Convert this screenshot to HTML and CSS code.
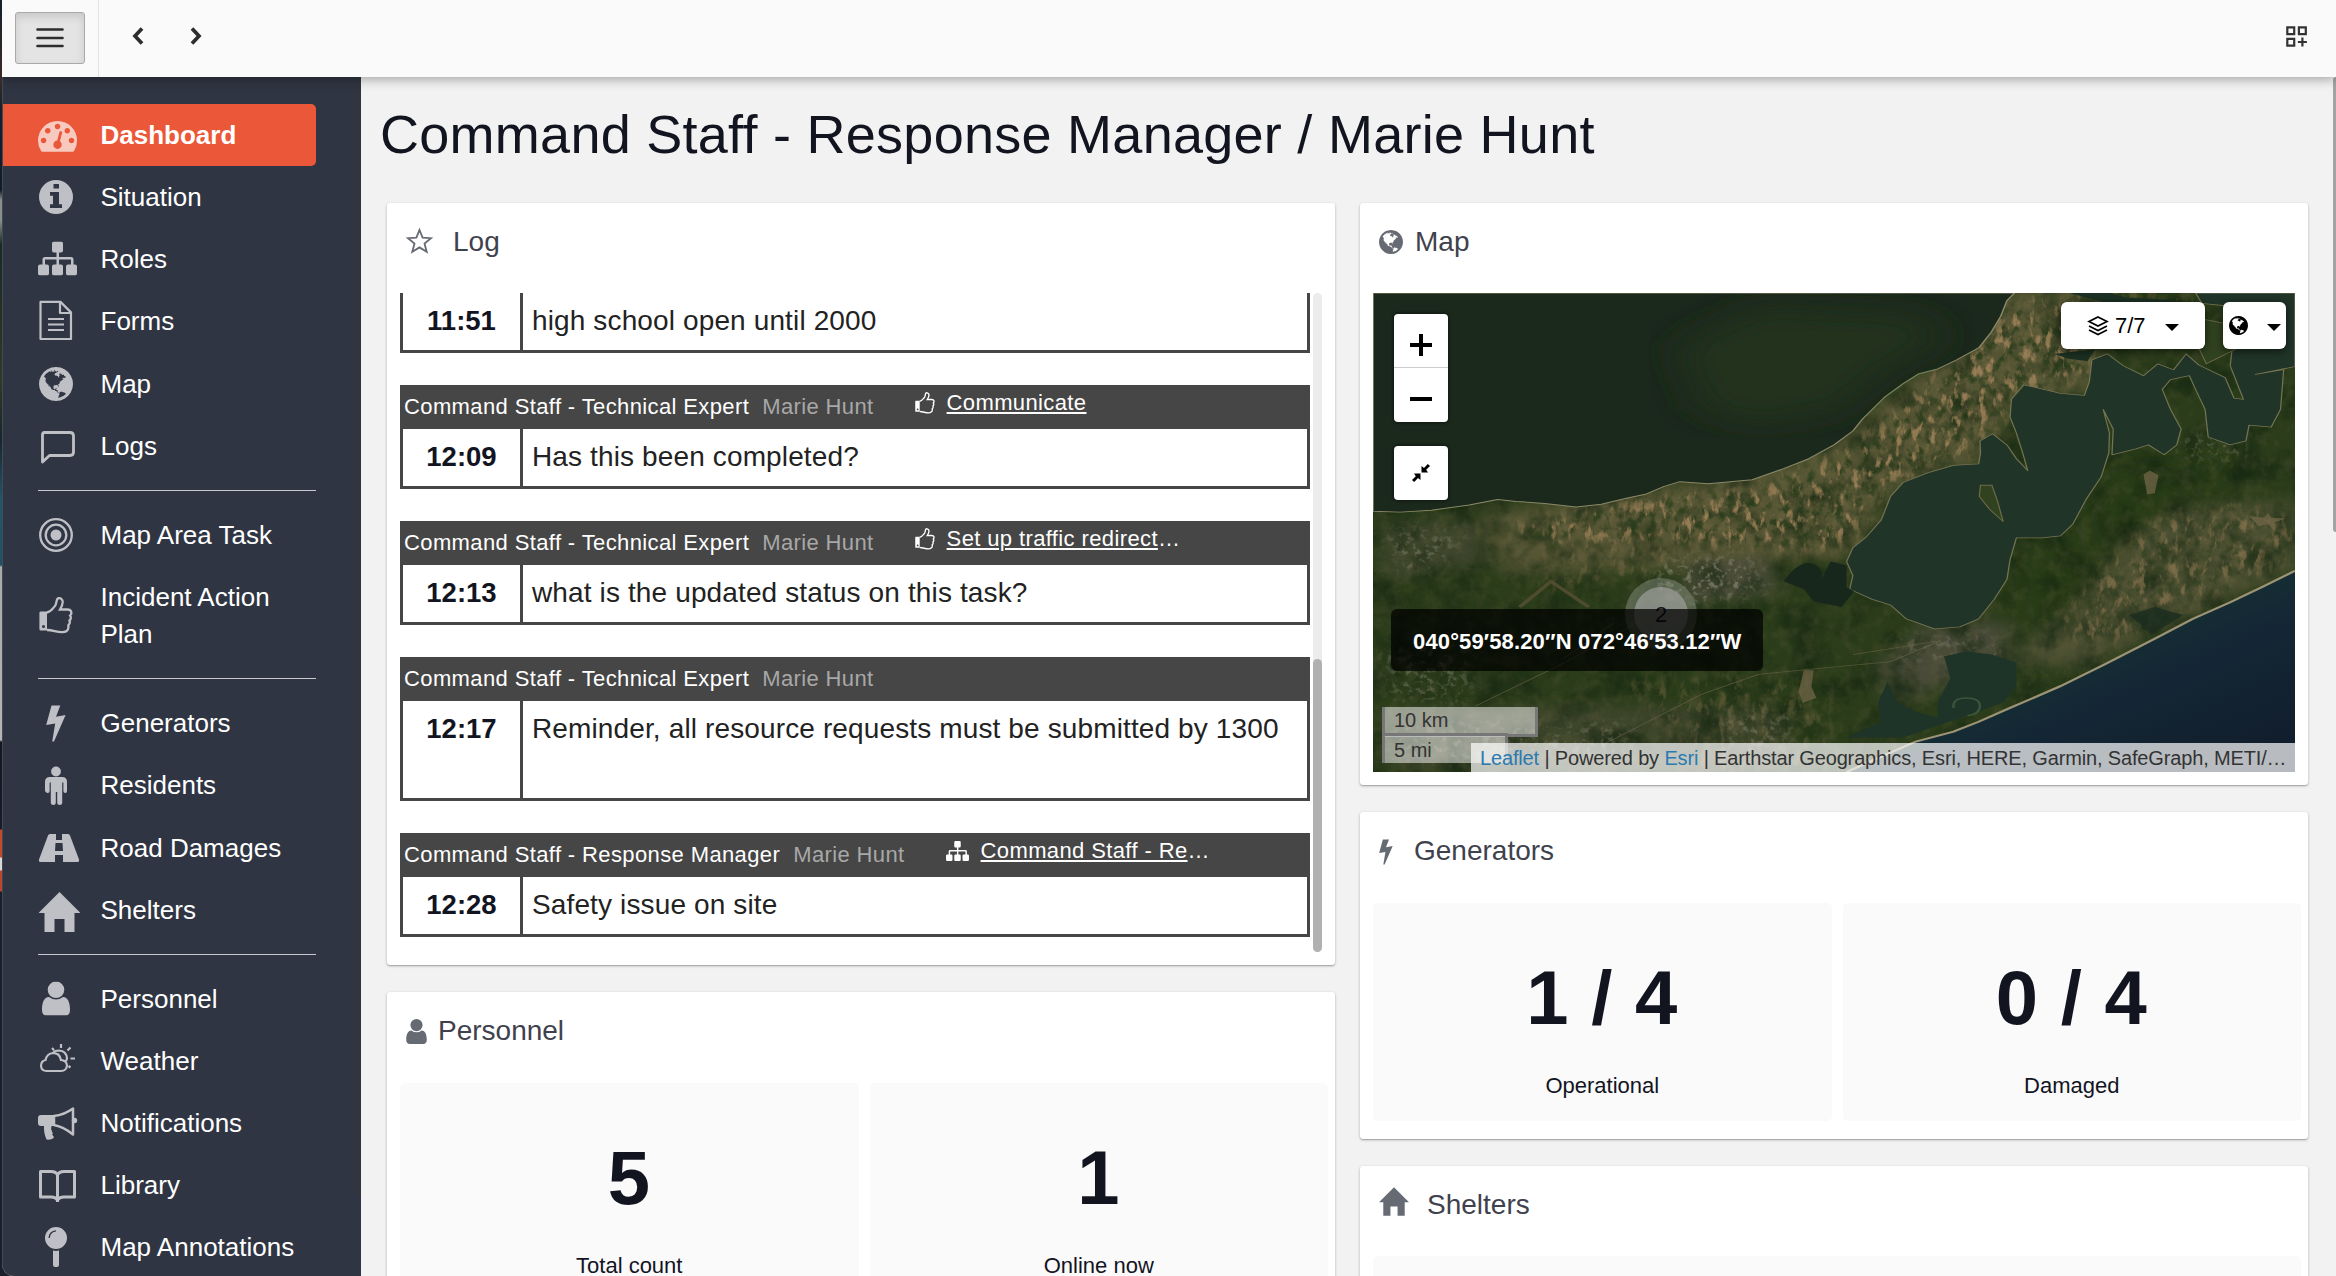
FILE: index.html
```html
<!DOCTYPE html>
<html lang="en">
<head>
<meta charset="utf-8">
<title>Command Staff Dashboard</title>
<link rel="stylesheet" href="styles.css">
</head>
<body>
<svg class="defs" aria-hidden="true">
  <symbol id="globe" viewBox="128 128 1536 1536"><path d="M896 128q209 0 385.500 103t279.500 279.500 103 385.500-103 385.500-279.500 279.500-385.500 103-385.500-103-279.500-279.500-103-385.500 103-385.500 279.500-279.500 385.500-103zm274 521q-2 1-9.500 9.500t-13.500 9.500q2 0 4.500-5t5-11 3.500-7q6-7 22-15 14-6 52-12 34-8 51 11-2-2 9.500-13t14.500-12q3-2 15-4.500t15-7.500l2-22q-12 1-17.500-7t-6.500-21q0 2-6 8 0-7-4.500-8t-11.500 1-9 1q-10-3-15-7.500t-8-16.500-4-15q-2-5-9.500-11t-9.500-10q-1-2-2.500-5.500t-3-6.500-4-5.500-5.500-2.500-7 5-7.500 10-4.500 5q-3-2-6-1.500t-4.500 1-4.500 3-5 3.500q-3 2-8.500 3t-8.500 2q15-5-1-11-10-4-16-3 9-4 7.500-12t-8.500-14h5q-1-4-8.500-8.500t-17.500-8.500-13-6q-8-5-34-9.500t-33-.5q-5 6-4.500 10.500t4 14 3.500 12.500q1 6-5.500 13t-6.500 12q0 7 14 15.500t10 21.500q-3 8-16 16t-16 12q-5 8-1.500 18.500t10.500 16.500q2 2 1.500 4t-3.500 4.500-5.500 4-6.500 3.500l-3 2q-11 5-20.500-6t-13.500-26q-7-25-16-30-23-8-29 1-5-13-41-26-25-9-58-4 6-1 0-15-7-15-19-12 3-6 4-17.500t1-13.500q3-13 12-23 1-1 7-8.500t9.500-13.500.5-6q35 4 50-11 5-5 11.500-17t10.500-17q9-6 14-5.500t14.500 5.500 14.500 5q14 1 15.500-11t-7.500-20q12 1 3-17-4-7-8-9-12-4-27 5-8 4 2 8-1-1-9.500 10.500t-16.500 17.500-16-5q-1-1-5.500-13.500t-9.500-13.500q-8 0-16 15 3-8-11-15t-24-8q19-12-8-27-7-4-20.500-5t-19.500 4q-5 7-5.500 11.500t5 8 10.500 5.500 11.500 4 8.500 3q14 10 8 14-2 1-8.500 3.500t-11.500 4.500-6 4q-3 4 0 14t-2 14q-5-5-9-17.500t-7-16.500q7 9-25 6l-10-1q-4 0-16 2t-20.500 1-13.500-8q-4-8 0-20 1-4 4-2-4-3-11-9.500t-10-8.500q-46 15-94 41 6 1 12-1 5-2 13-6.500t10-5.500q34-14 42-7l5-5q14 16 20 25-7-4-30-1-20 6-22 12 7 12 5 18-4-3-11.500-10t-14.500-11-15-5q-16 0-22 1-146 80-235 222 7 7 12 8 4 1 5 9t2.500 11 11.500-3q9 8 3 19 1-1 44 27 19 17 21 21 3 11-10 18-1-2-9-9t-9-4q-3 5 .5 18.500t10.500 12.500q-7 0-9.500 16t-2.500 35.500-1 23.500l2 1q-3 12 5.500 34.500t21.500 19.500q-13 3 20 43 6 8 8 9 3 2 12 7.500t15 10 10 10.500q4 5 10 22.500t14 23.500q-2 6 9.500 20t10.500 23q-1 0-2.500 1t-2.500 1q3 7 15.500 14t15.500 13q1 3 2 10t3 11 8 2q2-20-24-62-15-25-17-29-3-5-5.500-15.500t-4.500-14.500q2 0 6 1.500t8.500 3.500 7.500 4 2 3q-3 7 2 17.500t12 18.500 17 19 12 13q6 6 14 19.500t0 13.500q9 0 20 10.500t17 19.500q5 8 8 26t5 24q2 7 8.500 13.500t12.500 9.500l16 8 13 7q5 2 18.500 10.500t21.500 11.500q10 4 16 4t14.500-2.500 13.500-3.500q15-2 29 15t21 21q36 19 55 11-2 1 .5 7.500t8 15.500 9 14.500 5.500 8.500q5 6 18 15t18 15q6-4 7-9-3 8 7 20t18 10q14-3 14-32-31 15-49-18 0-1-2.500-5.500t-4-8.500-2.500-8.500 0-7.500 5-3q9 0 10-3.500t-2-12.500-4-13q-1-8-11-20t-12-15q-5 9-16 8t-16-9q0 1-1.500 5.500t-1.500 6.500q-13 0-15-1 1-3 2.500-17.500t3.500-22.500q1-4 5.500-12t7.500-14.500 4-12.500-4.500-9.500-17.500-2.500q-19 1-26 20-1 3-3 10.500t-5 11.500-9 7q-7 3-24 2t-24-5q-13-8-22.500-29t-9.500-37q0-10 2.500-26.500t3-25-5.500-24.500q3-2 9-9.500t10-10.500q2-1 4.500-1.500t4.500 0 4-1.500 3-6q-1-1-4-3-3-3-4-3 7 3 28.500-1.500t27.500 1.500q15 11 22-2 0-1-2.500-9.500t-.5-13.500q5 27 29 9 3 3 15.500 5t17.500 5q3 2 7 5.500t5.500 4.500 5-.5 8.500-6.500q10 14 12 24 11 40 19 44 7 3 11 2t4.500-9.500 0-14-1.500-12.500l-1-8v-18l-1-8q-15-3-18.500-12t1.500-18.500 15-18.500q1-1 8-3.500t15.500-6.500 12.500-8q21-19 15-35 7 0 11-9-1 0-5-3t-7.500-5-4.500-2q9-5 2-16 5-3 7.500-11t7.500-10q9 12 21 2 8-8 1-16 5-7 20.500-10.500t18.500-9.500q7 2 8-2t1-12 3-12q4-5 15-9t13-5l17-11q3-4 0-4 18 2 31-11 10-11-6-20 3-6-3-9.500t-15-5.500q3-1 11.500-.5t10.500-1.500q15-10-7-16-17-5-43 12zm-163 877q206-36 351-189-3-3-12.500-4.500t-12.500-3.500q-18-7-24-8 1-7-2.500-13t-8-9-12.500-8-11-7q-2-2-7-6t-7-5.500-7.500-4.500-8.500-2-10 1l-3 1q-3 1-5.500 2.500t-5.500 3-4 3 0 2.500q-21-17-36-22-5-1-11-5.500t-10.500-7-10-1.500-11.500 7q-5 5-6 15t-2 13q-7-5 0-17.500t2-18.500q-3-6-10.500-4.500t-12 4.500-11.500 8.500-9 6.500-8.500 5.500-8.500 7.500q-3 4-6 12t-5 11q-2-4-11.500-6.500t-9.500-5.500q2 10 4 35t5 38q7 31-12 48-27 25-29 40-4 22 12 26 0 7-8 20.500t-7 21.500q0 6 2 16z"/></symbol>
  <symbol id="sitemap" viewBox="0 0 39 34"><path d="M16 0h7a2 2 0 0 1 2 2v7a2 2 0 0 1-2 2h-2v4.500h12a2.500 2.500 0 0 1 2.500 2.500v5H37a2 2 0 0 1 2 2v7a2 2 0 0 1-2 2h-7a2 2 0 0 1-2-2v-7a2 2 0 0 1 2-2h3v-5H21v5h2a2 2 0 0 1 2 2v7a2 2 0 0 1-2 2h-7a2 2 0 0 1-2-2v-7a2 2 0 0 1 2-2h2.500v-5H7v5h2a2 2 0 0 1 2 2v7a2 2 0 0 1-2 2H2a2 2 0 0 1-2-2v-7a2 2 0 0 1 2-2h2.500v-5A2.500 2.500 0 0 1 7 15.500h11.500V11H16a2 2 0 0 1-2-2V2a2 2 0 0 1 2-2z"/></symbol>
  <symbol id="thumb" viewBox="0 0 34 37"><path fill-rule="evenodd" d="M1.500 14.500H8v19H2a1.600 1.600 0 0 1-1.600-1.600V16a1.500 1.500 0 0 1 1.100-1.500zM4.500 28a1.500 1.500 0 1 0 0 3 1.500 1.500 0 0 0 0-3z"/><path class="line" d="M8 15.500c4-.6 5.500-4 8-6.500 1.300-1.300 1.200-5 2.300-7 1-1.500 3.700-1 4.900 1 1.500 2.700-.4 6.500-2.200 9.500h7.500c4.200 0 4.800 4 2.600 6 1.200 1.600.8 4-.6 5 .7 2 .2 3.600-1.200 4.800.7 4.300-1.200 6.700-5.500 6.900-6.400.3-9-2-15.800-2.200" fill="none" stroke-width="2.300"/></symbol>
  <symbol id="bolt" viewBox="0 0 20 37"><path d="M5.500.5h8.800L10 11.800l9.600-1.700L8 36.500H6.200l3-18L.2 20z"/></symbol>
  <symbol id="home" viewBox="0 0 42 40"><path d="M21 0 42 21h-6v19H26V27H16v13H6V21H0z"/></symbol>
  <symbol id="person" viewBox="0 0 28 34"><path d="M14 0a8.300 8.300 0 1 1 0 16.600A8.300 8.300 0 0 1 14 0zM7 15.500q7 5 14 0c5 0 7 6 7 12.500 0 4-1.500 6-5 6H5c-3.500 0-5-2-5-6 0-6.500 2-12.500 7-12.500z"/></symbol>
</svg>

<div class="window">
  <header class="topbar">
    <button class="menu-button" aria-label="Menu">
      <svg width="28" height="20"><path d="M1.500 1.500h25M1.500 10h25M1.500 18h25" stroke="#2d2d2d" stroke-width="2.600" stroke-linecap="round"/></svg>
    </button>
    <div class="topbar-divider"></div>
    <svg class="back" width="12" height="18"><path d="M10 1.500 3 9l7 7.500" fill="none" stroke="#2d2d2d" stroke-width="3.700"/></svg>
    <svg class="forward" width="12" height="18"><path d="M2 1.500 9 9l-7 7.500" fill="none" stroke="#2d2d2d" stroke-width="3.700"/></svg>
    <svg class="add-widget" width="21" height="21"><path d="M1.300 1.300h6.900v6.900H1.300zM12.900 1.300h6.900v6.900h-6.900zM1.300 12.800h6.900v6.900H1.300zM16.400 11.500v9M11.900 16h9" fill="none" stroke="#333" stroke-width="2.200"/></svg>
  </header>

  <div class="workspace">
    <nav class="sidebar">
      <a class="nav-item active"><svg class="nav-icon"><path transform="translate(6 4.400) scale(.0218)" d="M384 1152q0-53-37.500-90.500t-90.500-37.500-90.500 37.500-37.500 90.500 37.500 90.500 90.500 37.500 90.500-37.500 37.500-90.500zm192-448q0-53-37.500-90.500t-90.500-37.500-90.500 37.500-37.500 90.500 37.500 90.500 90.500 37.500 90.500-37.500 37.500-90.500zm428 481l101-382q6-26-7.500-48.500t-38.500-29.500-48 6.500-30 39.500l-101 382q-60 5-107 43.500t-63 98.500q-20 77 20 146t117 89 146-20 89-117q16-60-6-117t-72-91zm660-33q0-53-37.500-90.500t-90.500-37.500-90.500 37.500-37.500 90.500 37.500 90.500 90.500 37.500 90.500-37.500 37.500-90.500zm-640-640q0-53-37.500-90.500t-90.500-37.500-90.500 37.500-37.500 90.500 37.500 90.500 90.500 37.500 90.500-37.500 37.500-90.500zm448 192q0-53-37.500-90.500t-90.500-37.500-90.500 37.500-37.500 90.500 37.500 90.500 90.500 37.500 90.500-37.500 37.500-90.500zm320 448q0 261-141 483-19 29-54 29h-1402q-35 0-54-29-141-221-141-483 0-182 71-348t191-286 286-191 348-71 348 71 286 191 191 286 71 348z"/></svg><span>Dashboard</span></a>
      <a class="nav-item"><svg class="nav-icon"><path fill-rule="evenodd" d="M24 7a17 17 0 1 1 0 34 17 17 0 0 1 0-34zm-2.500 4v4.500h5.500V11zm-3.500 8v3.700h3v8.600h-3V35h12v-3.700h-3V19z"/></svg><span>Situation</span></a>
      <a class="nav-item"><svg class="nav-icon"><use href="#sitemap" x="6" y="6.500" width="39" height="34"/></svg><span>Roles</span></a>
      <a class="nav-item"><svg class="nav-icon"><path d="M8.500 4.900h20l10.500 10.500V42h-30.500zM28 5v11h11M16 22h16M16 27.500h16M16 33h16" fill="none" class="line" stroke-width="2.200" stroke-linejoin="round"/></svg><span>Forms</span></a>
      <a class="nav-item"><svg class="nav-icon"><use href="#globe" x="7" y="7" width="34" height="34"/></svg><span>Map</span></a>
      <a class="nav-item"><svg class="nav-icon"><path d="M12.500 10.500h25.500q3.500 0 3.500 3.500v16q0 3.500-3.500 3.500H17.500L10.500 40V13q0-2.500 2-2.500z" fill="none" class="line" stroke-width="2.800" stroke-linejoin="round"/></svg><span>Logs</span></a>
      <hr>
      <a class="nav-item"><svg class="nav-icon"><circle cx="24" cy="24" r="5.500"/><circle cx="24" cy="24" r="10.300" fill="none" class="line" stroke-width="2.300"/><circle cx="24" cy="24" r="15.800" fill="none" class="line" stroke-width="2.300"/></svg><span>Map Area Task</span></a>
      <a class="nav-item"><svg class="nav-icon"><use href="#thumb" x="7" y="5" width="34" height="37"/></svg><span>Incident Action Plan</span></a>
      <hr>
      <a class="nav-item"><svg class="nav-icon"><use href="#bolt" x="14" y="6" width="20" height="37"/></svg><span>Generators</span></a>
      <a class="nav-item"><svg class="nav-icon"><circle cx="24" cy="10.500" r="4.900"/><path d="M18 16h12q5 0 5 5v9q0 2-1.800 2t-1.800-2v-8.500h-1.200V42q0 2-2.500 2t-2.500-2V31h-1.400v11q0 2-2.500 2t-2.500-2V21.500h-1.200V30q0 2-1.800 2T13 30v-9q0-5 5-5z"/></svg><span>Residents</span></a>
      <a class="nav-item"><svg class="nav-icon"><path fill-rule="evenodd" d="M18 10h6v6h6v-6h6q1.500 0 2 1.500l9 24q.6 2.500-1.500 2.500H31v-7h-8v7H8.500q-2.100 0-1.500-2.500l9-24q.5-1.500 2-1.500zm5.500 9-.5 8h8l-.5-8z"/></svg><span>Road Damages</span></a>
      <a class="nav-item"><svg class="nav-icon"><use href="#home" x="6.500" y="6" width="42" height="40"/></svg><span>Shelters</span></a>
      <hr>
      <a class="nav-item"><svg class="nav-icon"><use href="#person" x="10" y="6.500" width="28" height="34"/></svg><span>Personnel</span></a>
      <a class="nav-item"><svg class="nav-icon"><path d="M14.500 34H29q5.500 0 6-5.500-.5-5-6-5.500-1.500-7-8-7-6 .5-7.500 7Q9 24 9 29q.5 5 5.500 5zM21 16q1.500-2.500 6-2.500 7.500.5 8 8-.5 2-1.500 3M29 23q-1-4-3-6M29 7v4M20 11l2 2.200M38.500 10.500l-3 3M38.500 21.500H43M36.500 29l2 1.500" fill="none" class="line" stroke-width="2.200"/></svg><span>Weather</span></a>
      <a class="nav-item"><svg class="nav-icon"><path d="M9 16h13v11h-2.500q-1 3 .5 5.500t0 3l2 2.500-1 1.500q-2 1.500-6.500 1-3-7-2.500-13.500H9q-3 0-3-3v-5q0-3 3-3z"/><path d="M22 17q10-1 19-7.500v26Q32 28 22 26z" fill="none" class="line" stroke-width="2.500" stroke-linejoin="round"/><circle cx="42.500" cy="21.500" r="2.700"/></svg><span>Notifications</span></a>
      <a class="nav-item"><svg class="nav-icon"><path d="M8.500 10.500H19q5 0 6.500 3.500 1.500-3.500 6.500-3.500h10.500V36H32q-5 0-6.500 3.500Q24 36 19 36H8.500zM25.500 14v27" fill="none" class="line" stroke-width="3" stroke-linejoin="round"/></svg><span>Library</span></a>
      <a class="nav-item"><svg class="nav-icon"><path fill-rule="evenodd" d="M24 4a11 11 0 1 1 0 22 11 11 0 0 1 0-22zm0 3.200q-7 .5-7.500 7.800h1.300q.6-6 6.200-6.500zM21 27.500q3 .8 6 0V42q0 2-2 2h-2q-2 0-2-2z"/></svg><span>Map Annotations</span></a>
      <div class="sidebar-track"></div>
    </nav>

    <main class="content">
      <h1>Command Staff - Response Manager / Marie Hunt</h1>
      <div class="columns">
        <div class="column">
          <section class="card log-card">
            <h2><svg class="title-icon star" width="27" height="26"><path d="M13.500 2 16.600 9.600 25 10.200 18.500 15.600 20.700 23.800 13.500 19.400 6.300 23.800 8.500 15.600 2 10.200 10.400 9.600z" fill="none" stroke="#666a73" stroke-width="1.800"/></svg>Log</h2>
            <div class="log-view">
              <div class="log-list">
                <article class="entry"><div class="entry-body"><time>11:51</time><p>high school open until 2000</p></div></article>
                <article class="entry">
                  <div class="entry-head">Command Staff - Technical Expert<span class="author">Marie Hunt</span><svg class="ref-icon" width="20" height="22"><use href="#thumb"/></svg><a>Communicate</a></div>
                  <div class="entry-body"><time>12:09</time><p>Has this been completed?</p></div>
                </article>
                <article class="entry">
                  <div class="entry-head">Command Staff - Technical Expert<span class="author">Marie Hunt</span><svg class="ref-icon" width="20" height="22"><use href="#thumb"/></svg><a>Set up traffic redirect</a><span class="more">…</span></div>
                  <div class="entry-body"><time>12:13</time><p>what is the updated status on this task?</p></div>
                </article>
                <article class="entry">
                  <div class="entry-head">Command Staff - Technical Expert<span class="author">Marie Hunt</span></div>
                  <div class="entry-body tall"><time>12:17</time><p>Reminder, all resource requests must be submitted by 1300</p></div>
                </article>
                <article class="entry">
                  <div class="entry-head">Command Staff - Response Manager<span class="author">Marie Hunt</span><svg class="ref-icon wide" width="23" height="20"><use href="#sitemap"/></svg><a>Command Staff - Re</a><span class="more">…</span></div>
                  <div class="entry-body"><time>12:28</time><p>Safety issue on site</p></div>
                </article>
              </div>
              <div class="log-track"><div class="log-thumb"></div></div>
            </div>
          </section>
          <section class="card stats-card">
            <h2><svg class="title-icon person" width="21" height="25"><use href="#person"/></svg>Personnel</h2>
            <div class="stats">
              <div class="stat"><strong>5</strong><span>Total count</span></div>
              <div class="stat"><strong>1</strong><span>Online now</span></div>
            </div>
          </section>
        </div>

        <div class="column">
          <section class="card map-card">
            <h2><svg class="title-icon globe" width="24" height="24"><use href="#globe"/></svg>Map</h2>
            <div class="map">
              <svg class="imagery" viewBox="37 286 1466 1211" preserveAspectRatio="none">
                <defs>
                  <filter id="grain" x="0" y="0" width="100%" height="100%" color-interpolation-filters="sRGB"><feTurbulence type="fractalNoise" baseFrequency=".02 .013" numOctaves="5" seed="4"/><feColorMatrix values="0 0 0 0 .07  0 0 0 0 .14  0 0 0 0 .06  2.400 0 0 0 -1"/></filter>
                  <filter id="olive" x="0" y="0" width="100%" height="100%" color-interpolation-filters="sRGB"><feTurbulence type="fractalNoise" baseFrequency=".05 .03" numOctaves="5" seed="12"/><feColorMatrix values="0 0 0 0 .42  0 0 0 0 .39  0 0 0 0 .25  3 0 0 0 -1.300"/></filter>
                  <filter id="crops" x="0" y="0" width="100%" height="100%" color-interpolation-filters="sRGB"><feTurbulence type="fractalNoise" baseFrequency=".07 .035" numOctaves="4" seed="21"/><feColorMatrix values="0 0 0 0 .13  0 0 0 0 .22  0 0 0 0 .09  4 0 0 0 -1.900"/></filter>
                  <filter id="fields" x="0" y="0" width="100%" height="100%" color-interpolation-filters="sRGB"><feTurbulence type="fractalNoise" baseFrequency=".075 .026" numOctaves="4" seed="9"/><feColorMatrix values="0 0 0 0 .66  0 0 0 0 .53  0 0 0 0 .37  5.500 0 0 0 -3.050"/></filter>
                  <filter id="town" x="0" y="0" width="100%" height="100%" color-interpolation-filters="sRGB"><feTurbulence type="fractalNoise" baseFrequency=".09 .06" numOctaves="4" seed="31"/><feColorMatrix values="0 0 0 0 .56  0 0 0 0 .55  0 0 0 0 .48  5 0 0 0 -2.600"/></filter>
                  <filter id="soft"><feGaussianBlur stdDeviation="18"/></filter>
                  <filter id="shoal"><feGaussianBlur stdDeviation="35"/></filter>
                  <linearGradient id="ocean" x1="0" y1="0" x2="1" y2="1"><stop offset=".35" stop-color="#193633"/><stop offset=".6" stop-color="#142735"/><stop offset="1" stop-color="#101b2b"/></linearGradient>
                  <mask id="farm-area"><g filter="url(#soft)" fill="#fff"><path d="M250 880 500 800 650 780 800 680 920 520 1060 310 1170 300 1170 500 1060 540 1030 620 960 710 850 770 790 930 650 930 520 920 330 930z"/><path d="M1290 850 1400 820 1500 860 1503 950 1300 1100 1180 1190 1130 1120 1200 980zM1080 290h260v60h-260z" fill="#999"/><path d="M430 1260h330v237H560zM330 900 540 900 500 1000 300 1040z" fill="#555"/></g></mask>
                  <mask id="town-area"><g filter="url(#soft)" fill="#fff"><path d="M500 960 640 950 660 1040 540 1070 480 1020z"/><path d="M50 1180h140v140H70zM600 1350h120l-40 90h-80zM1310 650h110v60h-90zM60 880h130l-60 110H70z" fill="#aaa"/><path d="M70 1370h380v100H70zM870 1150h170v70H870z" fill="#888"/></g></mask>
                </defs>
                <rect x="37" y="286" width="1466" height="1211" fill="#2a3c1a"/>
                <g filter="url(#soft)">
                  <path d="M200 850 520 770 720 710 900 490 1060 270 1190 270 1190 530 1060 560 1000 720 860 790 800 950 550 980 250 1000z" fill="#575635"/>
                  <path d="M1270 830 1503 810V980L1170 1230 1040 1220 1150 1080z" fill="#4c4f30"/>
                  <path d="M540 970 660 950 680 1040 530 1070zM920 1120 1050 1120 1040 1220 860 1330 840 1230z" fill="#4a4c38"/>
                  <path d="M45 870 200 860 220 960 60 1020zM60 1340 460 1330 700 1340 680 1490 60 1490z" fill="#3d452a"/>
                  <path d="M1230 720 1400 700 1300 850 1180 960 1160 850zM1060 910 1200 980 1120 1130 1060 1110z" fill="#263a12"/>
                </g>
                <rect x="37" y="286" width="1466" height="1211" filter="url(#grain)" opacity=".7"/>
                <rect x="37" y="286" width="1466" height="1211" filter="url(#olive)" opacity=".2"/>
                <g mask="url(#farm-area)"><rect x="37" y="286" width="1466" height="1211" filter="url(#olive)" opacity=".6"/><rect x="37" y="286" width="1466" height="1211" filter="url(#crops)" opacity=".7"/><rect x="37" y="286" width="1466" height="1211" filter="url(#fields)" opacity=".8"/></g>
                <g mask="url(#town-area)"><rect x="37" y="286" width="1466" height="1211" filter="url(#town)" opacity=".65"/></g>
                <path d="M270 1080 320 1015 380 1080" fill="none" stroke="#5e5237" stroke-width="7" opacity=".7"/>
                <path d="M200 1330 330 1230 400 1170 500 1080M400 1430 560 1300 650 1250 860 1218 940 1165 800 1200M340 1210 420 1120" fill="none" stroke="#6b6546" stroke-width="2" opacity=".65"/>
                <path d="M722 1240h16l-4 40 8 30-22 12-6-30zM1262 745l10-10 14 12-6 45-12 3zM1430 850l24 4 6-12 6 12 22 2-18 10 2 24-12-20-14 6z" fill="#75684a" opacity=".7"/>
                <path d="M37 838 80 840 130 835 190 822 235 808 265 813 310 818 360 827 400 820 440 805 470 795 500 775 525 763 570 768 640 758 690 730 730 705 770 670 800 635 815 605 850 550 880 515 905 490 935 478 965 455 1000 425 1020 385 1035 345 1045 305 1057 286H37z" fill="#1b281c" stroke="#8a8768" stroke-width="2.500" stroke-linejoin="round"/>
                <g filter="url(#shoal)"><path d="M520 420 650 320 900 340 950 400 850 480 780 580 650 620 560 580z" fill="#20331f"/></g>
                <path d="M1000 718 960 722 920 740 880 765 860 800 845 860 820 905 800 930 790 965 800 1000 795 1035 830 1060 860 1075 885 1110 930 1135 970 1130 1000 1110 1025 1060 1045 1010 1050 960 1060 905 1100 905 1130 900 1150 870 1170 810 1195 750 1207 690 1208 640 1198 580 1214 630 1212 695 1250 680 1270 670 1295 695 1315 670 1322 630 1305 580 1292 530 1305 505 1335 495 1345 530 1360 580 1365 650 1400 670 1425 660 1430 620 1465 625 1480 580 1485 480 1440 492 1503 472V286H1345L1355 312 1415 322 1405 400 1400 470 1421 555 1406 552 1392 500 1350 468 1330 440 1310 480 1285 465 1262 495 1230 470 1205 440 1180 455 1176 510 1168 545 1130 540 1072 518 1052 555 1050 600 1060 640 1070 690 1078 735 1060 705 1045 670 1022 642 1002 660 1003 690z" fill="#203428" stroke="#747452" stroke-width="2" stroke-linejoin="round"/>
                <path d="M1145 286h65l25 12 75 6-20 12-90-6zM1120 440l65-12-12 30-30-6z" fill="#1b3022"/>
                <path d="M1003 772h18l9 40 9 52-22-32-16-32zM1350 350l50 15 12 60-50 40-18-60z" fill="#30421f" stroke="#6d6a48" stroke-width="2"/>
                <path d="M690 1015q25-55 45-45t15 40l15-45 25 10v55l12 10-20 40-45-15-15-30z" fill="#17271c"/>
                <path d="M945 1205 980 1192 1020 1200 1060 1220V1280L1040 1320 990 1350 880 1410 790 1410 845 1370 840 1320 855 1270 870 1320 900 1345 935 1360 935 1320 955 1260z" fill="#1f3428"/>
                <path d="M960 1335q-2-25 20-25t22 20-20 25" fill="none" stroke="#4a6a4a" stroke-width="4" opacity=".6"/>
                <path d="M1240 1100 1280 1080 1325 1100 1275 1150z" fill="#1b2d20" opacity=".8"/>
                <path d="M1503 988 1450 1030 1400 1068 1340 1110 1280 1160 1200 1225 1130 1280 1050 1335 1000 1370 960 1395 900 1420 850 1455 790 1497H1503z" fill="url(#ocean)"/>
                <path d="M1503 988 1450 1030 1400 1068 1340 1110 1280 1160 1200 1225 1130 1280 1050 1335 1000 1370 960 1395 900 1420 850 1455 790 1497" fill="none" stroke="#9c9474" stroke-width="5"/>
              </svg>
              <div class="cluster"><span>2</span></div>
              <div class="zoom-control"><button aria-label="Zoom in"><svg width="22" height="22"><path d="M11 0v22M0 11h22" stroke="#000" stroke-width="4"/></svg></button><button aria-label="Zoom out"><svg width="22" height="4"><path d="M0 2h22" stroke="#000" stroke-width="4"/></svg></button></div>
              <button class="collapse" aria-label="Exit full screen"><svg width="18" height="18"><path d="M0 16 3.800 12.200 2 9.500H8.500V16L6 14 2.200 18zM18 2 14.200 5.800 16 8.500H9.500V2L12 4 15.800 0z"/></svg></button>
              <div class="map-buttons">
                <button class="layers"><svg width="20" height="20"><path d="M10 1 19 5.500 10 10 1 5.500zM1 10l9 4.500L19 10M1 14l9 4.500L19 14" fill="none" stroke="#000" stroke-width="1.700"/></svg><span>7/7</span><i class="caret"></i></button>
                <button class="basemap"><svg width="19" height="19"><use href="#globe"/></svg><i class="caret"></i></button>
              </div>
              <div class="coordinates">040°59′58.20″N 072°46′53.12″W</div>
              <div class="scale"><div class="km">10 km</div><div class="mi">5 mi</div></div>
              <div class="attribution"><a>Leaflet</a> | Powered by <a>Esri</a> | Earthstar Geographics, Esri, HERE, Garmin, SafeGraph, METI/…</div>
            </div>
          </section>
          <section class="card stats-card generators">
            <h2><svg class="title-icon bolt" width="14" height="26"><use href="#bolt"/></svg>Generators</h2>
            <div class="stats">
              <div class="stat"><strong>1 / 4</strong><span>Operational</span></div>
              <div class="stat"><strong>0 / 4</strong><span>Damaged</span></div>
            </div>
          </section>
          <section class="card shelters">
            <h2><svg class="title-icon home" width="30" height="29"><use href="#home"/></svg>Shelters</h2>
            <div class="stats single"><div class="stat"></div></div>
          </section>
        </div>
      </div>
      <div class="page-thumb"></div>
    </main>
  </div>
</div>
</body>
</html>
```
FILE: styles.css
```css
* { box-sizing: border-box; }

body {
  margin: 0;
  height: 1276px;
  overflow: hidden;
  padding-left: 2px;
  background: linear-gradient(#16202b 0, #3b2a26 80px, #14202b 110px, #101c28 190px, #8b8f88 200px, #87908c 220px, #182a24 245px, #2f3a22 380px, #17262c 440px, #23566b 500px, #1e5066 565px, #a9aba8 567px, #b5b5b3 740px, #14171f 742px, #181c28 829px, #c44a2b 830px, #c44a2b 857px, #d8d8d8 858px, #d8d8d8 870px, #b8472b 871px, #b8472b 891px, #1a1f2c 892px, #1a1f2c 1276px);
  font-family: "Liberation Sans", Arial, sans-serif;
  color: #12141f;
}

.defs { position: absolute; width: 0; height: 0; }
button { border: 0; padding: 0; font: inherit; color: inherit; }
svg { display: block; flex: none; overflow: visible; }
.line { stroke: currentColor; }
svg { fill: currentColor; }

.window {
  height: 1276px;
  display: flex;
  flex-direction: column;
  overflow: hidden;
  border-bottom-left-radius: 12px;
  background: #f2f2f2;
}

/* top bar */
.topbar {
  position: relative;
  z-index: 2;
  flex: none;
  height: 77px;
  display: flex;
  align-items: flex-start;
  background: #fafafa;
  box-shadow: 0 2px 11px rgba(0, 0, 0, .35);
}
.menu-button {
  width: 70px;
  height: 52px;
  margin: 12px 13px 0 13px;
  display: grid;
  place-items: center;
  background: #e4e4e4;
  border: 1px solid #a9a9a9;
  border-radius: 3px;
  box-shadow: inset 0 4px 8px rgba(0, 0, 0, .12);
}
.topbar-divider { width: 1px; height: 77px; background: #e3e3e3; }
.back { margin: 27px 0 0 33px; }
.forward { margin: 27px 0 0 46px; }
.add-widget { margin: 26px 29px 0 auto; }

.workspace { flex: 1; display: flex; min-height: 0; }

/* sidebar */
.sidebar {
  position: relative;
  flex: none;
  width: 359px;
  padding-top: 27px;
  background: #303543;
  border-left: 1px solid #444956;
  color: #fff;
  overflow: hidden;
}
.nav-item {
  display: flex;
  align-items: center;
  gap: 20.5px;
  width: 314px;
  margin-left: -1px;
  padding: 13px 0 12px 30px;
  font-size: 26px;
  line-height: 37.140px;
}
.nav-item span { white-space: normal; margin-right: -20px; max-width: 214px; }
.nav-icon { width: 48px; height: 48px; margin: -6px 0; color: #bfc0c5; position: relative; top: -.5px; }
.nav-item.active { background: #eb5739; border-radius: 0 5px 5px 0; font-weight: bold; }
.nav-item.active .nav-icon { color: #f8c9bf; }
.sidebar hr { width: 278px; height: 1px; margin: 13px 0 13px 35px; border: 0; background: #c9cacf; }
.sidebar-track { position: absolute; right: 0; top: 0; width: 9px; height: 1118px; background: #30353f; }

/* content */
.content { position: relative; flex: 1; padding: 0 28px 0 26px; overflow: hidden; }
h1 {
  margin: 0 0 0 -7px;
  padding-top: 24px;
  height: 126px;
  font-size: 54px;
  line-height: 66px;
  font-weight: normal;
  letter-spacing: .27px;
  white-space: nowrap;
}
.columns { display: grid; grid-template-columns: 948px 948px; gap: 25px; }
.column { display: flex; flex-direction: column; gap: 27px; }
.card { background: #fff; border-radius: 3px; box-shadow: 0 1px 3px rgba(0, 0, 0, .25), 0 1px 1px rgba(0, 0, 0, .16); }
.card h2 {
  display: flex;
  align-items: flex-start;
  height: 90px;
  margin: 0;
  padding: 19px 0 0 19px;
  font-size: 28px;
  line-height: 40px;
  font-weight: normal;
  color: #3f424d;
}
.title-icon { margin-top: 8px; color: #666a73; }
.title-icon.star { margin: 6px 20px 0 0; }
.title-icon.person { margin: 8px 11px 0 0; }
.title-icon.globe { margin: 8px 12px 0 0; }
.title-icon.bolt { margin: 8px 21px 0 0; }
.title-icon.home { margin: 2px 18px 0 0; }

/* log */
.log-card { height: 762px; }
.log-view { display: flex; height: 659px; padding-left: 13px; gap: 3px; }
.log-list { width: 910px; display: flex; flex-direction: column; justify-content: flex-end; gap: 32px; padding-bottom: 15px; overflow: hidden; }
.entry { border-bottom: 3px solid #464646; flex: none; }
.entry-head { display: flex; height: 44px; padding-left: 4px; background: #464646; color: #fff; font-size: 22px; line-height: 43px; letter-spacing: .38px; white-space: nowrap; }
.author { margin-left: 13px; color: #a8a8a8; }
.ref-icon { margin: 7px 12px 0 41px; }
.ref-icon.wide { margin-top: 8px; }
.entry-head a, .more { line-height: 36px; }
.entry-head a { text-decoration: underline; text-decoration-thickness: 2px; text-underline-offset: 2px; }
.entry-body { display: flex; height: 57px; border: solid #464646; border-width: 0 3px; font-size: 28px; line-height: 40px; }
.entry-body.tall { height: 97px; }
.entry-body time { width: 117px; padding-top: 8px; text-align: center; font-weight: bold; font-size: 27.5px; }
.entry-body p { flex: 1; margin: 0; padding: 8px 0 0 9px; border-left: 3px solid #464646; color: #222; white-space: nowrap; letter-spacing: .13px; }
.log-track { width: 9px; background: #ececec; border-radius: 5px; padding-top: 366px; }
.log-thumb { height: 293px; border-radius: 5px; background: #b1b1b1; }

/* stat boxes */
.stats-card { height: 327px; padding-top: 1px; }
.stats-card h2 { margin-top: -1px; height: 91px; }
.stats { display: grid; grid-template-columns: 1fr 1fr; gap: 11px; padding: 0 7px 0 13px; }
.stats.single { grid-template-columns: 1fr; }
.stats-card .stats { margin-top: -1px; padding-top: 1px; }
.stat { display: flex; flex-direction: column; align-items: center; height: 218px; padding-top: 57px; background: #fafafa; border-radius: 5px; }
.stat strong { font-size: 76px; line-height: 75px; letter-spacing: .8px; }
.stat span { margin-top: 36px; font-size: 22px; line-height: 30px; }

/* map */
.map-card { height: 582px; }
.map { position: relative; width: 922px; height: 479px; margin-left: 13px; overflow: hidden; background: #263818; color: #000; }
.imagery { width: 922px; height: 479px; overflow: hidden; }
.cluster { position: absolute; left: 252px; top: 285px; width: 72px; height: 72px; padding: 9px; border-radius: 50%; background: rgba(160, 165, 155, .38); }
.cluster span { display: block; height: 54px; border-radius: 50%; background: rgba(170, 170, 170, .6); font-size: 22px; line-height: 56px; text-align: center; color: #15151c; }
.zoom-control, .collapse { position: absolute; left: 21px; width: 54px; border-radius: 4px; background: #fff; box-shadow: 0 0 2px 2px rgba(0, 0, 0, .25); }
.zoom-control { top: 21px; height: 108px; }
.zoom-control button { display: grid; place-items: center; width: 54px; height: 54px; padding-top: 9px; background: none; border-bottom: 1px solid #ccc; }
.zoom-control button:last-child { border: 0; padding-top: 8px; }
.collapse { top: 153px; height: 54px; display: grid; place-items: center; }
.map-buttons { position: absolute; top: 9px; right: 9px; display: flex; gap: 18px; }
.map-buttons button { display: flex; align-items: center; height: 47px; border-radius: 6px; background: #fff; box-shadow: 0 2px 8px rgba(0, 0, 0, .6); font-size: 22px; }
.layers { width: 144px; padding-left: 27px; }
.layers span { margin-left: 7px; }
.basemap { width: 63px; padding-left: 6px; }
.caret { margin: 3px 0 0 19px; border: 7px solid transparent; border-top-color: #000; border-bottom: 0; }
.coordinates { position: absolute; left: 18px; top: 316px; width: 372px; height: 62px; padding-left: 22px; border-radius: 6px; background: rgba(0, 0, 0, .72); color: #fff; font-size: 22px; line-height: 66px; letter-spacing: .14px; font-weight: bold; white-space: nowrap; }
.scale { position: absolute; left: 9px; top: 414px; font-size: 20px; line-height: 27px; color: #333; }
.scale div { height: 30px; padding-left: 9px; border: 3px solid #777; background: rgba(255, 255, 255, .5); }
.scale .km { width: 156px; border-top: 0; }
.scale .mi { width: 126px; margin-top: -4px; border-bottom: 0; line-height: 29px; }
.attribution { position: absolute; right: 0; bottom: 0; width: 824px; height: 29px; padding-left: 9px; background: rgba(255, 255, 255, .7); font-size: 20px; line-height: 30px; letter-spacing: -.15px; color: #333; white-space: nowrap; }
.attribution a { color: #2a7ab0; }

.shelters { height: 327px; }
.page-thumb { position: absolute; right: 0; top: 0; width: 3px; height: 455px; background: #a3a3a3; border-radius: 3px 0 0 3px; }
```
